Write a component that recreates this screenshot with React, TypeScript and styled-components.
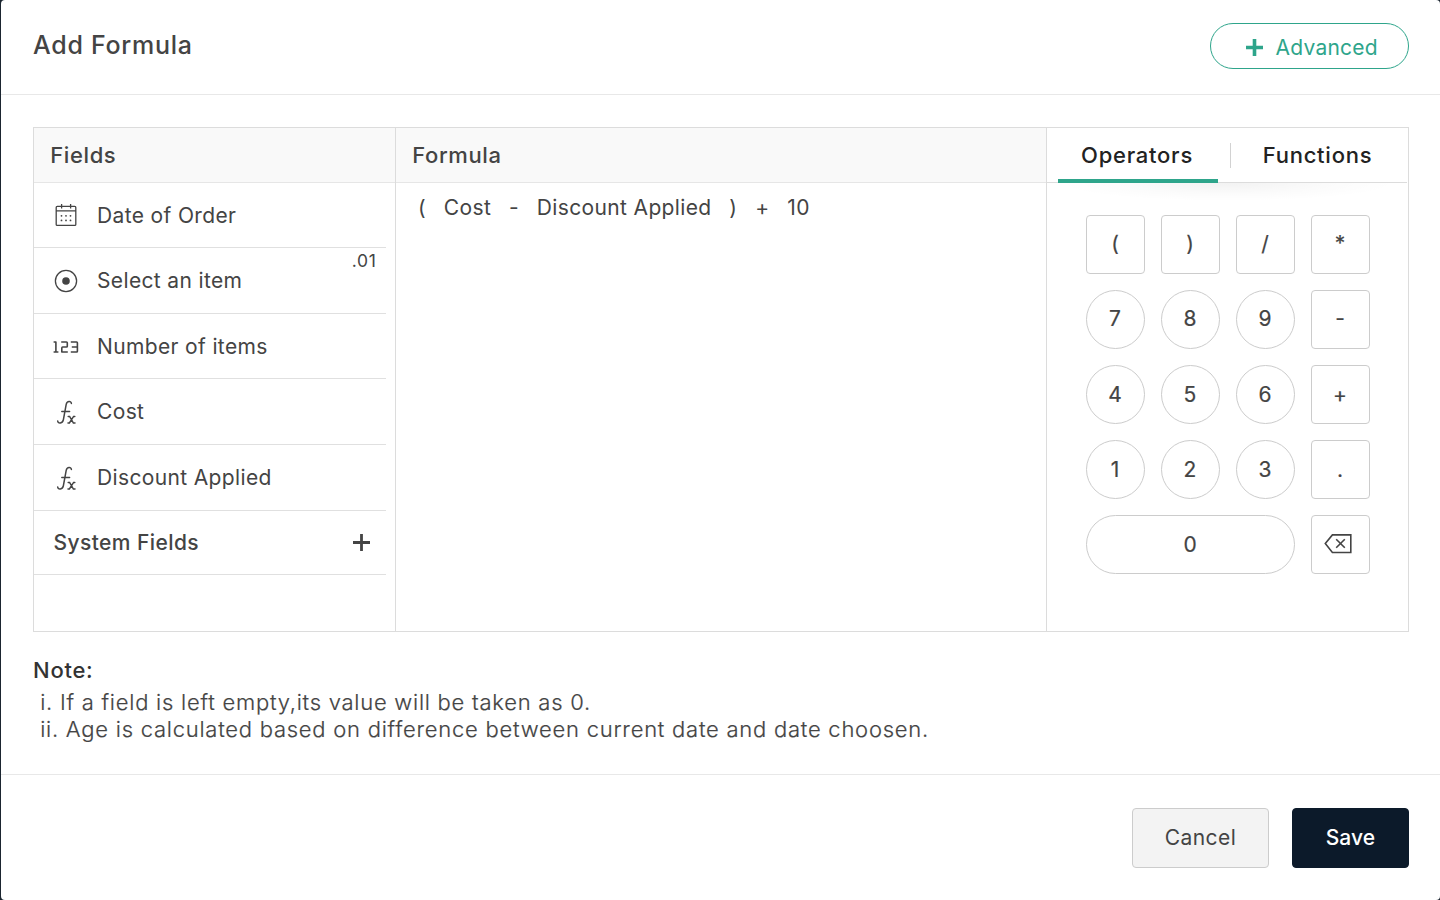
import React from 'react';
import styled, { createGlobalStyle, css } from 'styled-components';

const GlobalStyle = createGlobalStyle`
  * { box-sizing: border-box; }
  html, body { margin: 0; padding: 0; background: #1b2530; }
  body { font-family: Inter, "Liberation Sans", sans-serif; color: #444; -webkit-font-smoothing: antialiased; }
  button { font-family: inherit; margin: 0; cursor: pointer; }
`;

const GREEN = '#2ea58b';

const Dialog = styled.div`
  display: flex;
  flex-direction: column;
  height: 900px;
  margin-left: 1px;
  background: #fff;
  border-radius: 4px;
  overflow: hidden;
`;

const Header = styled.header`
  display: flex;
  justify-content: space-between;
  align-items: flex-start;
  height: 95px;
  padding: 23px 31px 0 32px;
  border-bottom: 1px solid #e8e8e8;
`;

const Title = styled.h1`
  margin: 0;
  font-size: 25px;
  font-weight: 500;
  line-height: 45px;
  letter-spacing: 0.72px;
`;

const AdvancedButton = styled.button`
  display: flex;
  align-items: center;
  gap: 12.5px;
  width: 199px;
  height: 46px;
  padding: 3px 0 0 35px;
  border: 1px solid ${GREEN};
  border-radius: 23px;
  background: #fff;
  color: ${GREEN};
  font-size: 21px;
  letter-spacing: 0.25px;
`;

const Content = styled.main`
  flex: none;
  height: 680px;
  padding: 32px 31px 0 32px;
  border-bottom: 1px solid #e8e8e8;
`;

const Builder = styled.div`
  display: grid;
  grid-template-columns: 361px 651px 1fr;
  height: 505px;
  border: 1px solid #dcdcdc;
`;

const Column = styled.section`
  & + & { border-left: 1px solid #dcdcdc; }
`;

const ColumnTitle = styled.h2`
  height: 55px;
  margin: 0;
  padding-left: 16.2px;
  background: #f9f9f9;
  border-bottom: 1px solid #e6e6e6;
  font-size: 22px;
  font-weight: 500;
  line-height: 54px;
  letter-spacing: 0.62px;
`;

const FieldRow = styled.div<{ $height: number; $group?: boolean }>`
  position: relative;
  display: flex;
  align-items: center;
  width: 352px;
  height: ${p => p.$height}px;
  padding: 0 16px 0 19px;
  border-bottom: 1px solid #e0e0e0;
  font-size: 21px;
  letter-spacing: 0.36px;
  ${p => p.$group && css`
    justify-content: space-between;
    padding-left: 19.5px;
    font-weight: 500;
    letter-spacing: 0.42px;
  `}
`;

const IconSlot = styled.span`
  display: flex;
  width: 26px;
  height: 26px;
  margin-right: 18px;
`;

const DecimalTag = styled.span`
  position: absolute;
  top: 3px;
  right: 9.4px;
  font-size: 17.5px;
  line-height: 20px;
  letter-spacing: 0.7px;
`;

const Expression = styled.div`
  display: flex;
  gap: 17.8px;
  padding: 12px 22px;
  font-size: 21px;
  line-height: 26px;
  letter-spacing: 0.36px;
`;

const Tabs = styled.nav`
  display: flex;
  align-items: center;
  height: 55px;
  margin-right: 1px;
  padding-left: 11px;
  border-bottom: 1px solid #dcdcdc;
`;

const Tab = styled.button<{ $active?: boolean }>`
  width: 160px;
  height: 55px;
  margin-bottom: -1px;
  padding: 1px ${p => (p.$active ? 2 : 0)}px 0 ${p => (p.$active ? 0 : 1)}px;
  border: 0;
  border-bottom: 4px solid ${p => (p.$active ? GREEN : 'transparent')};
  background: none;
  color: #222;
  font-size: 22px;
  font-weight: 500;
  line-height: 52px;
  letter-spacing: 0.75px;
`;

const TabDivider = styled.span`
  width: 1px;
  height: 25px;
  margin: 0 6px 0 12px;
  background: #d2d2d2;
`;

const TabShadow = styled.div`
  height: 18px;
  margin: 0 12px;
  background: radial-gradient(ellipse 50% 100% at 50% 0, rgba(0, 0, 0, 0.05), rgba(0, 0, 0, 0.015) 60%, transparent);
`;

const Keypad = styled.div`
  display: grid;
  grid-template-columns: repeat(4, 59px);
  grid-auto-rows: 59px;
  gap: 16px;
  padding: 14px 0 0 39px;
`;

const Key = styled.button<{ $round?: boolean; $wide?: boolean }>`
  display: flex;
  align-items: center;
  justify-content: center;
  grid-column: span ${p => (p.$wide ? 3 : 1)};
  padding: 0 1px 1px 0;
  border: 1px solid #ccc;
  border-radius: ${p => (p.$round ? 30 : 4)}px;
  background: #fff;
  color: #444;
  font-size: 21px;
  -webkit-text-stroke: 0.2px #444;

  &:nth-child(-n + 8) { padding-bottom: 3px; }
  &:last-child { padding: 0 6px 1px 0; }
`;

const NoteTitle = styled.h3`
  margin: 24px 0 0;
  color: #333;
  font-size: 22px;
  font-weight: 500;
  line-height: 28px;
  letter-spacing: 0.75px;
`;

const Note = styled.p`
  margin: 0;
  padding-left: 7.2px;
  font-size: 22px;
  font-weight: 300;
  line-height: 27px;
  letter-spacing: 0.75px;
  -webkit-text-stroke: 0.2px #444;
`;

const Notes = styled.div`
  padding-top: 5px;
`;

const Footer = styled.footer`
  display: flex;
  justify-content: flex-end;
  gap: 23px;
  padding: 33px 31px 0 0;
`;

const ActionButton = styled.button<{ $primary?: boolean }>`
  width: ${p => (p.$primary ? 117 : 137)}px;
  height: 60px;
  padding: 0 0 2px;
  border: 1px solid ${p => (p.$primary ? '#0c1a2a' : '#ccc')};
  border-radius: 4px;
  background: ${p => (p.$primary ? '#0c1a2a' : '#f3f3f3')};
  color: ${p => (p.$primary ? '#fff' : '#444')};
  font-size: 21px;
  font-weight: ${p => (p.$primary ? 500 : 400)};
  letter-spacing: ${p => (p.$primary ? 0.1 : 0.4)}px;
`;

const Plus = ({ size, weight }: { size: number; weight: number }) => (
  <svg width={size} height={size} viewBox={`0 0 ${size} ${size}`} stroke="currentColor" strokeWidth={weight}>
    <path d={`M0 ${size / 2}H${size}M${size / 2} 0V${size}`} />
  </svg>
);

const stroke = { fill: 'none', stroke: '#444', strokeWidth: 1.3 };

const CalendarIcon = () => (
  <svg width="26" height="26" viewBox="0 0 26 26" {...stroke}>
    <rect x="3.2" y="4.4" width="19.6" height="19" rx="1" />
    <path d="M3 8.8H23M8.6 2V6.4M17.6 2V6.4" />
    <g fill="#444" stroke="none">
      {[8.5, 13, 17.5].map(x => [13.8, 18.4].map(y => <circle key={`${x}-${y}`} cx={x} cy={y} r="0.9" />))}
    </g>
  </svg>
);

const RadioIcon = () => (
  <svg width="26" height="26" viewBox="0 0 26 26" {...stroke}>
    <circle cx="13" cy="13" r="10.6" />
    <circle cx="13" cy="13" r="3.8" fill="#444" stroke="none" />
  </svg>
);

const NumberIcon = () => (
  <svg width="26" height="26" viewBox="0 0 26 26" {...stroke} strokeWidth={1.6} strokeLinejoin="round">
    <path d="M0.6 9H2.9V19M0.6 19H5.4" />
    <path d="M8.2 9H13.4Q14.3 9 14.3 9.8V13.2Q14.3 14 13.4 14H9.7Q8.8 14 8.8 14.9V19H14.8" />
    <path d="M17.8 9H23.6Q24.4 9 24.4 9.8V18.2Q24.4 19 23.6 19H17.8M18.8 14H24.2" />
  </svg>
);

const FunctionIcon = () => (
  <svg width="26" height="26" viewBox="0 0 26 26" {...stroke} strokeWidth={1.5} strokeLinecap="round">
    <path d="M18.4 4.6C18.4 1.8 14 1.6 13.2 5.4L10.4 20.6C9.8 24.6 4.8 24.9 4.7 22M8.8 12.4H16.6" />
    <path d="M15.2 17.4H16.6L20.4 24H22M21.8 17.4H20.6L16.4 24H15" />
  </svg>
);

const BackspaceIcon = () => (
  <svg width="28" height="20" viewBox="0 0 28 20" {...stroke} strokeWidth={1.6}>
    <path d="M1.3 9.6L8.4 0.9H26.8V18.5H8.4Z" />
    <path d="M12.2 5.2L20.8 13.8M20.8 5.2L12.2 13.8" />
  </svg>
);

const fields = [
  { label: 'Date of Order', icon: <CalendarIcon />, height: 65 },
  { label: 'Select an item', icon: <RadioIcon />, height: 66, tag: '.01' },
  { label: 'Number of items', icon: <NumberIcon />, height: 65 },
  { label: 'Cost', icon: <FunctionIcon />, height: 66 },
  { label: 'Discount Applied', icon: <FunctionIcon />, height: 66 },
];

const tokens = ['(', 'Cost', '-', 'Discount Applied', ')', '+', '10'];
const keys = ['(', ')', '/', '*', '7', '8', '9', '-', '4', '5', '6', '+', '1', '2', '3', '.', '0'];

export default function App() {
  return (
    <>
      <GlobalStyle />
      <Dialog>
        <Header>
          <Title>Add Formula</Title>
          <AdvancedButton>
            <Plus size={17} weight={3.6} />
            Advanced
          </AdvancedButton>
        </Header>
        <Content>
          <Builder>
            <Column>
              <ColumnTitle>Fields</ColumnTitle>
              {fields.map(f => (
                <FieldRow key={f.label} $height={f.height}>
                  <IconSlot>{f.icon}</IconSlot>
                  {f.label}
                  {f.tag && <DecimalTag>{f.tag}</DecimalTag>}
                </FieldRow>
              ))}
              <FieldRow $height={64} $group>
                System Fields
                <Plus size={17} weight={2.8} />
              </FieldRow>
            </Column>
            <Column>
              <ColumnTitle>Formula</ColumnTitle>
              <Expression>
                {tokens.map((t, i) => <span key={i}>{t}</span>)}
              </Expression>
            </Column>
            <Column>
              <Tabs>
                <Tab $active>Operators</Tab>
                <TabDivider />
                <Tab>Functions</Tab>
              </Tabs>
              <TabShadow />
              <Keypad>
                {keys.map(k => (
                  <Key key={k} $round={/\d/.test(k)} $wide={k === '0'}>{k}</Key>
                ))}
                <Key aria-label="Backspace"><BackspaceIcon /></Key>
              </Keypad>
            </Column>
          </Builder>
          <NoteTitle>Note:</NoteTitle>
          <Notes>
            <Note>i. If a field is left empty,its value will be taken as 0.</Note>
            <Note>ii. Age is calculated based on difference between current date and date choosen.</Note>
          </Notes>
        </Content>
        <Footer>
          <ActionButton>Cancel</ActionButton>
          <ActionButton $primary>Save</ActionButton>
        </Footer>
      </Dialog>
    </>
  );
}
